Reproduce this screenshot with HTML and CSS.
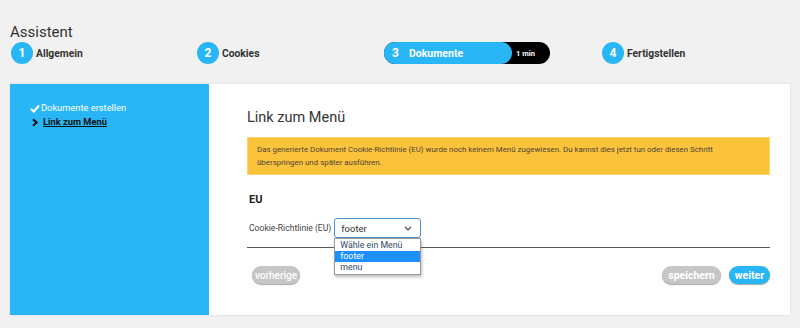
FILE: index.html
```html
<!DOCTYPE html>
<html lang="de">
<head>
<meta charset="utf-8">
<title>Assistent</title>
<link rel="stylesheet" href="styles.css">
</head>
<body>
<header class="header">
  <h1 class="title">Assistent</h1>
  <div class="steps">
    <div class="step s1"><span class="num">1</span><span class="label">Allgemein</span></div>
    <div class="step s2"><span class="num">2</span><span class="label">Cookies</span></div>
    <div class="step s3">
      <div class="pill">
        <div class="pill-active"><span class="pnum">3</span><span class="plabel">Dokumente</span></div>
        <span class="time">1 min</span>
      </div>
    </div>
    <div class="step s4"><span class="num">4</span><span class="label">Fertigstellen</span></div>
  </div>
</header>
<div class="panel">
  <aside class="sidebar">
    <div class="side-item done">
      <svg class="ico" width="10" height="9" viewBox="0 0 10 9"><path d="M1 4.8 L3.8 7.5 L9 1.5" fill="none" stroke="#fff" stroke-width="2.2"/></svg>
      <span>Dokumente erstellen</span>
    </div>
    <div class="side-item current">
      <svg class="ico" width="10" height="9" viewBox="0 0 10 9"><path d="M3 1.2 L6.6 4.5 L3 7.8" fill="none" stroke="#111" stroke-width="2"/></svg>
      <span class="cur-link">Link zum Menü</span>
    </div>
  </aside>
  <main class="main">
    <h2 class="heading">Link zum Menü</h2>
    <div class="alert">Das generierte Dokument Cookie-Richtlinie (EU) wurde noch keinem Menü zugewiesen. Du kannst dies jetzt tun oder diesen Schritt überspringen und später ausführen.</div>
    <h3 class="section">EU</h3>
    <div class="form-row">
      <span class="field-label">Cookie-Richtlinie (EU)</span>
      <div class="select-wrap">
        <div class="select"><span>footer</span>
          <svg class="chev" width="8" height="5" viewBox="0 0 8 5"><path d="M1 1 L4 4 L7 1" fill="none" stroke="#444" stroke-width="1.2"/></svg>
        </div>
        <ul class="options">
          <li>Wähle ein Menü</li>
          <li class="sel">footer</li>
          <li>menu</li>
        </ul>
      </div>
    </div>
    <hr class="rule">
    <div class="actions">
      <button class="btn grey prev">vorherige</button>
      <div class="right-actions">
        <button class="btn grey">speichern</button>
        <button class="btn blue">weiter</button>
      </div>
    </div>
  </main>
</div>
</body>
</html>
```
FILE: styles.css
```css
* { box-sizing: border-box; }
body {
  margin: 0;
  background: #f1f1f1;
  font-family: Roboto, "Liberation Sans", sans-serif;
  color: #333;
  width: 800px;
  height: 328px;
  overflow: hidden;
}
.header { padding: 23px 0 0 10px; }
.title {
  margin: 0;
  font-family: Roboto, sans-serif;
  font-weight: 400;
  font-size: 15px;
  line-height: 19px;
  color: #333;
}
.steps {
  display: grid;
  grid-template-columns: 186px 187px 218px 1fr;
  height: 22px;
  margin-left: 1px;
}
.step { display: flex; align-items: center; }
.num {
  width: 22px; height: 22px; border-radius: 50%;
  background: #29b6f6; color: #fff;
  font-weight: 700; font-size: 12px;
  display: flex; align-items: center; justify-content: center;
}
.label { margin-left: 3px; font-weight: 700; font-size: 10.3px; color: #333; }
.pill {
  width: 166px; height: 22px; border-radius: 11px;
  background: #000; display: flex; align-items: center;
}
.pill-active {
  width: 128px; height: 22px; border-radius: 11px;
  background: #29b6f6; color: #fff; display: flex; align-items: center;
  padding-left: 8px;
}
.pnum { font-weight: 700; font-size: 12px; width: 17px; }
.plabel { font-weight: 700; font-size: 10.5px; }
.time { color: #fff; font-weight: 700; font-size: 7.5px; margin-left: 4px; }
.panel {
  margin: 20px 10px 0 10px;
  height: 231px;
  display: flex;
  background: #fff;
  box-shadow: 0 0 2px rgba(0,0,0,0.12);
}
.sidebar {
  width: 199px;
  background: #29b6f6;
  padding: 17px 0 0 20px;
}
.side-item {
  display: flex; align-items: center;
  font-size: 9.3px; line-height: 14px;
}
.ico { margin-right: 1px; }
.done { color: #fff; }
.current { color: #111; font-weight: 700; }
.cur-link { text-decoration: underline; margin-left: 2px; }
.main {
  flex: 1;
  padding: 24px 20px 0 38px;
}
.heading {
  margin: 0;
  font-weight: 400;
  font-size: 14.5px;
  line-height: 20px;
  color: #333;
}
.alert {
  margin-top: 9px;
  background: #fbc23c;
  border: 1px solid #fdd36b;
  padding: 5px 50px 5px 9px;
  font-size: 7.9px;
  line-height: 13px;
  color: #4e4535;
}
.section {
  margin: 17px 0 0 2px;
  font-size: 11px;
  line-height: 16px;
  font-weight: 700;
  color: #222;
}
.form-row {
  margin: 10px 0 0 2px;
  display: flex; align-items: center;
  height: 20px;
}
.field-label { font-size: 8.6px; color: #444; margin-right: 3px; }
.select-wrap { position: relative; }
.select {
  width: 87px; height: 20px;
  border: 1px solid #4a8fd4; border-radius: 3px;
  display: flex; align-items: center; justify-content: space-between;
  padding: 0 8px 0 6px;
  font-size: 9.5px; color: #333;
}
.options {
  position: absolute; left: 0; top: 20px;
  width: 87px; margin: 0; padding: 1px 0;
  list-style: none; background: #fff;
  border: 1px solid #9a9a9a;
  box-shadow: 1px 2px 3px rgba(0,0,0,0.25);
  z-index: 2;
}
.options li {
  font-size: 8.8px; line-height: 11px; height: 11px;
  padding-left: 5px; color: #2e4a66;
}
.options li.sel { background: #1e8fff; color: #fff; }
.rule {
  margin: 9px 0 0 0;
  border: 0; border-top: 1px solid #5a5a5a;
  height: 0;
}
.actions {
  margin-top: 18px;
  display: flex; justify-content: space-between; align-items: center;
}
.right-actions { display: flex; gap: 8px; }
.btn {
  border: 0; height: 18px; border-radius: 9px;
  font-family: Roboto, sans-serif; font-weight: 700; font-size: 10.5px;
  color: #fff; padding: 0 6px;
  box-shadow: 0 1px 1px rgba(0,0,0,0.35);
}
.grey { background: #c6c6c6; }
.blue { background: #29b6f6; }
.prev { margin-left: 5px; font-weight: 500; font-size: 10px; width: 48px; padding: 0; }
```
